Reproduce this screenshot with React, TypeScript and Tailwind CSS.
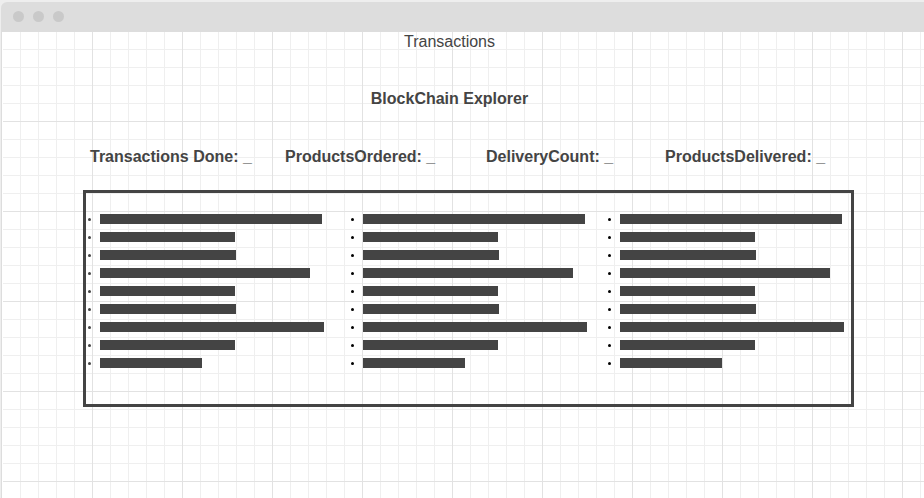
const barWidths = [
  'w-[222px]',
  'w-[135px]',
  'w-[136px]',
  'w-[210px]',
  'w-[135px]',
  'w-[136px]',
  'w-[224px]',
  'w-[135px]',
  'w-[102px]',
];

const stats = ['Transactions Done: _', 'ProductsOrdered: _', 'DeliveryCount: _', 'ProductsDelivered: _'];

const gridPaper =
  'bg-white bg-[linear-gradient(to_right,#e2e2e2_1px,transparent_1px),linear-gradient(to_bottom,#e2e2e2_1px,transparent_1px),linear-gradient(to_right,#efefef_1px,transparent_1px),linear-gradient(to_bottom,#efefef_1px,transparent_1px)] bg-[length:90px_90px,90px_90px,18px_18px,18px_18px] bg-[position:-1px_-1px]';

function PlaceholderList({ dotColor }: { dotColor: string }) {
  return (
    <ul className="flex flex-col gap-2">
      {barWidths.map((width, index) => (
        <li key={index} className="flex items-center gap-[9px] pl-[2px]">
          <span className={`size-[3px] shrink-0 rounded-full ${dotColor}`} />
          <span className={`h-[10px] max-w-full ${width} bg-[#444444]`} />
        </li>
      ))}
    </ul>
  );
}

export default function App() {
  return (
    <div className="flex min-h-screen flex-col bg-[#eeeeee] pt-[2px] pl-px font-['Liberation_Sans',Arial,sans-serif] text-base text-[#444444]">
      <div className="flex grow flex-col rounded-tl-md bg-[#dddddd] pl-px">
        <header className="flex h-[30px] items-center gap-[9px] pb-px pl-[11px]">
          <span className="size-[11px] rounded-full bg-[#c9c9c9]" />
          <span className="size-[11px] rounded-full bg-[#c9c9c9]" />
          <span className="size-[11px] rounded-full bg-[#c9c9c9]" />
        </header>
        <div className="flex grow flex-col bg-white pl-px">
          <main className={`grow ${gridPaper}`}>
            <div className="pr-7 text-center leading-5">
              <p>Transactions</p>
              <h1 className="mt-[37px] font-bold">BlockChain Explorer</h1>
            </div>
            <section className="mr-[70px] ml-20">
              <div className="mt-[38px] grid grid-cols-[195fr_201fr_179fr_189fr] pl-[7px] leading-5 font-bold whitespace-nowrap">
                {stats.map((label) => (
                  <h2 key={label}>{label}</h2>
                ))}
              </div>
              <div className="mt-[23px] grid grid-cols-[263fr_257fr_245fr] border-[3px] border-[#444444] pt-[21px] pb-9">
                <PlaceholderList dotColor="bg-[#444444]" />
                <PlaceholderList dotColor="bg-black" />
                <PlaceholderList dotColor="bg-black" />
              </div>
            </section>
          </main>
        </div>
      </div>
    </div>
  );
}
